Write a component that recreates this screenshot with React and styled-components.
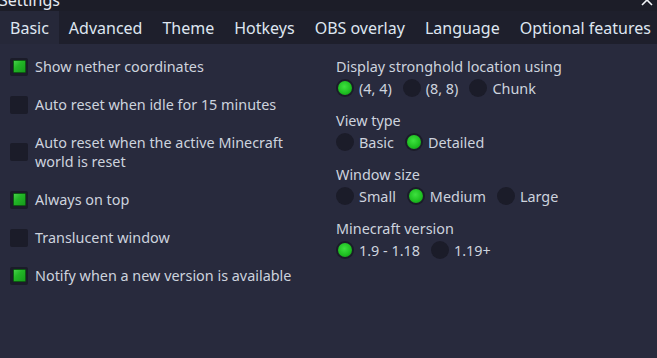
import React from "react";
import styled, { createGlobalStyle } from "styled-components";

const Global = createGlobalStyle`
  html, body { margin: 0; padding: 0; background: #282a3d; }
  body { width: 657px; height: 358px; overflow: hidden; font-family: "Noto Sans", "Open Sans", sans-serif; }
  #root { height: 358px; }
`;

const Window = styled.div`
  display: flex;
  flex-direction: column;
  height: 358px;
  background: #282a3d;
  color: #cdd3de;
`;

const TitleBar = styled.div`
  height: 11px;
  background: #1c1d28;
  overflow: hidden;
  display: flex;
  justify-content: space-between;
  align-items: flex-end;
`;

const Title = styled.span`
  font-size: 16px;
  line-height: 16px;
  color: #e6ebf2;
  margin-bottom: 3px;
  margin-left: -1px;
`;

const Close = styled.svg`
  margin-right: 4px;
  margin-bottom: 5px;
`;

const TabBar = styled.div`
  display: flex;
  height: 33px;
  background: #1e1f2c;
  white-space: nowrap;
`;

const Tab = styled.div`
  flex: none;
  padding: 1px 10px 0;
  font-size: 16px;
  line-height: 32px;
  color: #dfe6f1;
  background: ${(p) => (p.$active ? "#262839" : "transparent")};
`;

const Body = styled.div`
  display: flex;
  padding-top: 13px;
`;

const LeftCol = styled.div`
  width: 326px;
  padding-left: 10px;
  display: flex;
  flex-direction: column;
  gap: 19px;
`;

const CheckRow = styled.div`
  display: flex;
  align-items: center;
  gap: 7px;
`;

const Box = styled.div`
  flex: none;
  width: 18px;
  height: 18px;
  box-sizing: border-box;
  border-radius: 2px;
  background: #1b1c29;
  display: flex;
  align-items: center;
  justify-content: center;
`;

const Tick = styled.div`
  width: 13px;
  height: 13px;
  box-sizing: border-box;
  border-radius: 1px;
  border: 1px solid #0d5d12;
  background: linear-gradient(135deg, #48d04a 0%, #22b526 40%, #169a1c 100%);
`;

const Label = styled.span`
  font-size: 14.4px;
  line-height: 19px;
  max-width: 275px;
`;

const RightCol = styled.div`
  display: flex;
  flex-direction: column;
  gap: 14px;
`;

const Group = styled.div`
  display: flex;
  flex-direction: column;
  gap: 3px;
`;

const GroupTitle = styled.div`
  font-size: 14.4px;
  line-height: 19px;
`;

const RadioRow = styled.div`
  display: flex;
  align-items: center;
  gap: 11px;
  height: 18px;
`;

const Radio = styled.div`
  display: flex;
  align-items: center;
  gap: 5px;
  font-size: 14.4px;
`;

const Circle = styled.div`
  flex: none;
  width: 18px;
  height: 18px;
  border-radius: 50%;
  background: #1b1c29;
  display: flex;
  align-items: center;
  justify-content: center;
`;

const Dot = styled.div`
  width: 14px;
  height: 14px;
  border-radius: 50%;
  background: radial-gradient(circle at 45% 40%, #3ee13f 0%, #1fc022 55%, #0f8a14 100%);
`;

const checks = [
  ["Show nether coordinates", true],
  ["Auto reset when idle for 15 minutes", false],
  ["Auto reset when the active Minecraft world is reset", false],
  ["Always on top", true],
  ["Translucent window", false],
  ["Notify when a new version is available", true],
];

const groups = [
  ["Display stronghold location using", ["(4, 4)", "(8, 8)", "Chunk"], 0],
  ["View type", ["Basic", "Detailed"], 1],
  ["Window size", ["Small", "Medium", "Large"], 1],
  ["Minecraft version", ["1.9 - 1.18", "1.19+"], 0],
];

const tabs = ["Basic", "Advanced", "Theme", "Hotkeys", "OBS overlay", "Language", "Optional features"];

export default function App() {
  return (
    <Window>
      <Global />
      <TitleBar>
        <Title>Settings</Title>
        <Close width="12" height="12" viewBox="0 0 12 12">
          <path d="M1 1 L11 11 M11 1 L1 11" stroke="#f2f4f8" strokeWidth="1.6" />
        </Close>
      </TitleBar>
      <TabBar>
        {tabs.map((t, i) => (
          <Tab key={t} $active={i === 0}>{t}</Tab>
        ))}
      </TabBar>
      <Body>
        <LeftCol>
          {checks.map(([l, c]) => (
            <CheckRow key={l}>
              <Box>{c && <Tick />}</Box>
              <Label>{l}</Label>
            </CheckRow>
          ))}
        </LeftCol>
        <RightCol>
          {groups.map(([title, opts, sel]) => (
            <Group key={title}>
              <GroupTitle>{title}</GroupTitle>
              <RadioRow>
                {opts.map((o, i) => (
                  <Radio key={o}>
                    <Circle>{i === sel && <Dot />}</Circle>
                    {o}
                  </Radio>
                ))}
              </RadioRow>
            </Group>
          ))}
        </RightCol>
      </Body>
    </Window>
  );
}
